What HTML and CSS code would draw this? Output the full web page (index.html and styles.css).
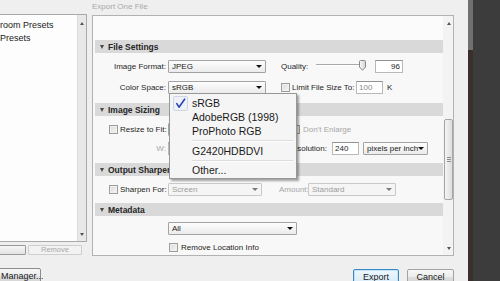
FILE: index.html
```html
<!DOCTYPE html>
<html lang="en">
<head>
<meta charset="utf-8">
<title>Export One File</title>
<link rel="stylesheet" href="styles.css">
</head>
<body>
<div class="screen">
  <div class="dialog">
    <div class="left">
      <div class="list">
        <div class="list-items">
          <div class="list-item">room Presets</div>
          <div class="list-item">Presets</div>
        </div>
        <div class="vscroll-s">
          <span class="arr up"></span>
          <span class="arr down"></span>
        </div>
      </div>
      <div class="list-buttons">
        <button class="sbtn add" aria-label="Add"></button>
        <button class="sbtn remove" disabled>Remove</button>
      </div>
      <button class="btn manager">Manager...</button>
    </div>

    <div class="right">
      <div class="title">Export One File</div>
      <div class="panel">
        <div class="content">
          <div class="spacer"></div>

          <div class="sec-head"><span class="tri"></span>File Settings</div>
          <div class="sec-body file">
            <div class="row">
              <div class="lbl">Image Format:</div>
              <div class="select w98"><span>JPEG</span><span class="caret"></span></div>
              <div class="lbl2 quality">Quality:</div>
              <div class="slider">
                <div class="track"></div>
                <svg class="knob" width="7" height="11" viewBox="0 0 7 11">
                  <defs><linearGradient id="kg" x1="0" y1="0" x2="1" y2="0"><stop offset="0" stop-color="#fafafa"/><stop offset="1" stop-color="#d4d4d4"/></linearGradient></defs>
                  <path d="M0.5 1.5 Q0.5 0.5 1.5 0.5 H5.5 Q6.5 0.5 6.5 1.5 V7 L3.5 10.3 L0.5 7 Z" fill="url(#kg)" stroke="#8a8a8a" stroke-width="1"/>
                </svg>
              </div>
              <div class="input w28 num">96</div>
            </div>
            <div class="row">
              <div class="lbl">Color Space:</div>
              <div class="select w98 anchor"><span>sRGB</span><span class="caret"></span>
                <div class="menu">
                  <div class="menu-item"><span class="gut"><span class="checkbox-ico"><svg width="11" height="11" viewBox="0 0 11 11"><path d="M1.8 5.6 L4 9.2 L9.6 1.2" fill="none" stroke="#2b43b6" stroke-width="1.6" stroke-linecap="round" stroke-linejoin="round"/></svg></span></span>sRGB</div>
                  <div class="menu-item"><span class="gut"></span>AdobeRGB (1998)</div>
                  <div class="menu-item"><span class="gut"></span>ProPhoto RGB</div>
                  <div class="menu-sep"></div>
                  <div class="menu-item"><span class="gut"></span>G2420HDBDVI</div>
                  <div class="menu-sep"></div>
                  <div class="menu-item"><span class="gut"></span>Other...</div>
                </div>
              </div>
              <span class="cb limit"></span>
              <div class="lbl2 limit-lbl">Limit File Size To:</div>
              <div class="input w27 dim">100</div>
              <div class="unit">K</div>
            </div>
          </div>

          <div class="sec-head"><span class="tri"></span>Image Sizing</div>
          <div class="sec-body sizing">
            <div class="row">
              <div class="lbl-left"><span class="cb"></span><span>Resize to Fit:</span></div>
              <div class="select w98"><span></span><span class="caret"></span></div>
              <span class="cb enlarge"></span>
              <div class="lbl2 dis enlarge-lbl">Don't Enlarge</div>
            </div>
            <div class="row">
              <div class="lbl dis">W:</div>
              <div class="input w32 dim"></div>
              <div class="gap15"></div>
              <div class="input w32 dim"></div>
              <div class="lbl2 res-lbl">Resolution:</div>
              <div class="input w27 res-in">240</div>
              <div class="select w65 ppi"><span>pixels per inch</span><span class="caret"></span></div>
            </div>
          </div>

          <div class="sec-head"><span class="tri"></span>Output Sharpening</div>
          <div class="sec-body sharpen">
            <div class="row">
              <div class="lbl-left"><span class="cb"></span><span>Sharpen For:</span></div>
              <div class="select w94 disabled"><span>Screen</span><span class="caret"></span></div>
              <div class="lbl2 dis amount-lbl">Amount:</div>
              <div class="select w88 disabled amount"><span>Standard</span><span class="caret"></span></div>
            </div>
          </div>

          <div class="sec-head"><span class="tri"></span>Metadata</div>
          <div class="sec-body meta">
            <div class="row">
              <div class="select w129 meta-sel"><span>All</span><span class="caret"></span></div>
            </div>
            <div class="row meta-cb">
              <span class="cb"></span><span class="cb-lbl">Remove Location Info</span>
            </div>
          </div>
        </div>
        <div class="vscroll-m">
          <span class="arr up"></span>
          <div class="thumb"><i></i><i></i><i></i></div>
          <div class="grow"></div>
          <span class="arr down"></span>
        </div>
      </div>
      <div class="footer">
        <button class="btn export">Export</button>
        <button class="btn cancel">Cancel</button>
      </div>
    </div>
  </div>
  <div class="dark">
    <div class="dark-edge"><div class="dark-edge-top"></div><div class="dark-edge-bot"></div></div>
    <div class="dark-fill"></div>
  </div>
</div>
</body>
</html>
```

FILE: styles.css
```css
* { box-sizing: border-box; margin: 0; padding: 0; }
html, body { width: 500px; height: 281px; overflow: hidden; }
body {
  font-family: "Liberation Sans Narrow", "Liberation Sans", Arial, sans-serif;
  font-size: 8px;
  color: #1e1e1e;
  background: #efefef;
}
.screen { display: flex; align-items: flex-start; width: 500px; height: 281px; overflow: hidden; }
.dialog { width: 468px; height: 281px; flex: none; display: flex; align-items: flex-start; background: #efefef; }

/* left column */
.left { width: 87px; flex: none; display: flex; flex-direction: column; }
.left > * { flex: none; }
.list { margin-top: 14px; height: 228px; display: flex; border: 1px solid #a9a9a9; border-left: none; }
.list-items { flex: 1; background: #fdfdfd; padding-top: 4px; }
.list-item { height: 13px; line-height: 13px; font-size: 9px; white-space: nowrap; color: #1a1a1a; }
.vscroll-s {
  width: 9px; background: #e8e8e8; border-left: 1px solid #dcdcdc;
  display: flex; flex-direction: column; justify-content: space-between; align-items: center;
  padding: 7px 0 5px;
}
.arr { width: 0; height: 0; border-left: 2.5px solid transparent; border-right: 2.5px solid transparent; }
.arr.up { border-bottom: 3px solid #555; }
.arr.down { border-top: 3px solid #555; }

.list-buttons { margin-top: 3px; height: 10px; display: flex; gap: 2px; }
.sbtn {
  width: 54px; height: 10px; flex: none; font: inherit; font-size: 7.5px; line-height: 8px;
  border: 1px solid #9a9a9a; border-radius: 1px; background: linear-gradient(#f6f6f6, #e2e2e2); color: #1a1a1a;
}
.sbtn.add { margin-left: -28px; }
.sbtn.remove { border-color: #cfcfcf; background: #f2f2f2; color: #a8a8a8; }

.btn {
  height: 16px; font: inherit; font-size: 9px; line-height: 14px; color: #1a1a1a;
  border: 1px solid #8c8c8c; border-radius: 2px;
  background: linear-gradient(#f7f7f7 0%, #ececec 50%, #dedede 51%, #d4d4d4 100%);
}
.manager { margin-top: 13px; width: 51px; margin-left: -10px; padding-left: 10px; text-align: left; }

/* right column */
.right { width: 362px; margin-left: 5px; flex: none; display: flex; flex-direction: column; }
.right > * { flex: none; }
.title { height: 15px; line-height: 14px; color: #a9a9a9; font-size: 8px; }
.panel { height: 241px; border: 1px solid #b2b2b2; background: #f8f8f8; display: flex; }
.content { flex: 1; position: relative; overflow: hidden; }
.spacer { height: 24px; background: #fbfbfb; }

.sec-head {
  margin-left: 2px; height: 13px; background: #d9d9d9;
  display: flex; align-items: center; gap: 4px; padding-left: 5px;
  font-weight: bold; font-size: 8.5px; color: #262626; white-space: nowrap;
}
.tri { width: 0; height: 0; border-left: 2.5px solid transparent; border-right: 2.5px solid transparent; border-top: 4px solid #474747; }

.sec-body { display: flex; flex-direction: column; }
.sec-body.file { gap: 8px; padding: 7px 0 9px; }
.sec-body.sizing { gap: 6px; padding: 7px 0 8px; }
.sec-body.sharpen { padding: 7px 0 7px; }
.sec-body.meta { gap: 6px; padding: 6px 0 0; }

.row { height: 13px; display: flex; align-items: center; white-space: nowrap; flex: none; }
.lbl { width: 73px; flex: none; text-align: right; margin-right: 2px; }
.lbl-left { width: 73px; flex: none; margin-right: 2px; padding-left: 16px; display: flex; align-items: center; gap: 2px; }
.lbl2 { flex: none; }
.dis { color: #a6a6a6; }

.select {
  position: relative; height: 13px; flex: none;
  border: 1px solid #a3a3a3; border-radius: 1px;
  background: linear-gradient(#fdfdfd, #ebebeb);
  display: flex; align-items: center; justify-content: space-between;
  padding: 0 3px 0 3px; font-size: 8px; color: #1a1a1a;
}
.caret { width: 0; height: 0; border-left: 3px solid transparent; border-right: 3px solid transparent; border-top: 3.5px solid #111; }
.select.disabled { color: #9c9c9c; border-color: #c9c9c9; background: #f5f5f5; }
.select.disabled .caret { border-top-color: #7a7a7a; }
.w98 { width: 98px; }
.w94 { width: 94px; }
.w88 { width: 88px; }
.w65 { width: 65px; }
.w129 { width: 129px; }

.input {
  height: 13px; flex: none; border: 1px solid #b9b9b9; border-top-color: #929292;
  background: #fff; font-size: 8px; line-height: 11px; padding: 0 2px;
}
.input.num { text-align: right; }
.input.dim { color: #8a8a8a; }
.w28 { width: 28px; }
.w27 { width: 27px; }
.w32 { width: 32px; }
.gap15 { width: 15px; flex: none; }

.cb {
  width: 9px; height: 9px; flex: none;
  border: 1px solid #9d9d9d;
  background: linear-gradient(135deg, #d9d9d9, #f7f7f7);
  box-shadow: inset 0 0 0 1px #efefef;
}

/* file settings row details */
.quality { margin-left: 15px; width: 35px; }
.slider { width: 50px; height: 13px; display: flex; align-items: flex-start; flex: none; }
.track { flex: 1; margin-top: 4px; height: 2px; border-top: 1px solid #a8a8a8; border-bottom: 1px solid #fff; background: #d0d0d0; }
.knob { flex: none; margin-left: -1px; }
.slider + .input { margin-left: 9px; }
.cb.limit { margin-left: 15px; }
.limit-lbl { margin-left: 2px; width: 64px; }
.unit { margin-left: 4px; }

/* menu */
.anchor { z-index: 5; }
.menu {
  position: absolute; left: 0; top: 100%; width: 128px; z-index: 10;
  background: #f5f5f5; border: 1px solid #979797;
  box-shadow: 2px 2px 2px rgba(0, 0, 0, 0.35);
  padding: 2px 0 1px; font-size: 10.5px; color: #1a1a1a;
}
.menu-item { height: 14px; line-height: 14px; display: flex; align-items: center; white-space: nowrap; }
.gut { width: 22px; flex: none; height: 14px; display: flex; align-items: center; padding-left: 3px; }
.checkbox-ico {
  width: 15px; height: 15px; border: 1px solid #cdd6e0; border-radius: 2px; background: #eef2f6;
  display: flex; align-items: center; justify-content: center;
}
.menu-sep { height: 2px; background: #dcdcdc; border-bottom: 1px solid #fff; margin: 2px 3px 1.5px 22px; }

/* image sizing */
.cb.enlarge { margin-left: 25px; }
.enlarge-lbl { margin-left: 3px; }
.res-lbl { width: 80px; text-align: right; }
.res-in { margin-left: 5px; }
.ppi { margin-left: 4px; }

/* sharpening */
.amount-lbl { margin-left: 17px; width: 26px; }
.amount { margin-left: 3px; }

/* metadata */
.meta-sel { margin-left: 75px; }
.meta-cb { padding-left: 76px; gap: 3px; }

/* main scrollbar */
.vscroll-m {
  width: 10px; flex: none; background: #f3f3f3;
  display: flex; flex-direction: column; align-items: flex-end; padding: 6px 0 5px;
}
.vscroll-m .arr { margin-right: 2px; }
.thumb {
  margin-top: 94px; width: 9px; height: 81px; flex: none;
  border: 1px solid #a5a5a5; border-radius: 2px;
  background: linear-gradient(90deg, #f4f4f4, #dedede);
  display: flex; flex-direction: column; justify-content: center; align-items: center; gap: 1px;
}
.thumb i { display: block; width: 4px; height: 1px; background: #8c8c8c; }
.grow { flex: 1; }

/* footer */
.footer { margin-top: 13px; display: flex; justify-content: flex-end; gap: 8px; }
.export { width: 46px; border-color: #3c8ac4; background: linear-gradient(#eef7fd, #d6ebf8); box-shadow: inset 0 0 0 1px #bfe2f8; }
.cancel { width: 47px; border-color: #a3a3a3; }

/* dark area on the right */
.dark { flex: 1; height: 281px; display: flex; }
.dark-edge { width: 5px; display: flex; flex-direction: column; }
.dark-edge-top { height: 50px; background: #707070; }
.dark-edge-bot { flex: 1; background: #3a2f2c; }
.dark-fill { flex: 1; background: #3c3c3c; }
```
